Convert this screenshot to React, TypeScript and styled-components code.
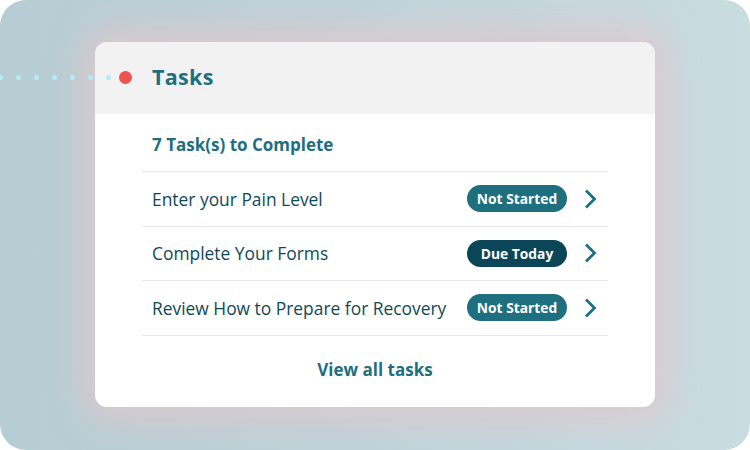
import React from "react"
import styled, { createGlobalStyle } from "styled-components"

const GlobalStyle = createGlobalStyle`
    html, body {
        margin: 0;
        padding: 0;
        background: #ffffff;
    }
    body {
        font-family: "Open Sans", "Noto Sans", sans-serif;
    }
`

const Backdrop = styled.div`
    width: 750px;
    height: 450px;
    box-sizing: border-box;
    border-radius: 26px;
    background: linear-gradient(90deg, #b5cdd3 0%, #bfd4d9 50%, #c9dce0 100%);
    padding: 42px 95px 43px 95px;
    position: relative;
    overflow: hidden;
`

const Card = styled.div`
    position: relative;
    height: 100%;
    border-radius: 12px;
    background: #ffffff;
    box-shadow: 0 0 36px 14px rgba(226, 198, 206, 0.8);
    display: flex;
    flex-direction: column;
`

const Header = styled.div`
    height: 72px;
    background: #f2f2f2;
    border-radius: 12px 12px 0 0;
    display: flex;
    align-items: center;
    padding: 0 0 3px 57px;
    box-sizing: border-box;
    font-size: 21.5px;
    font-weight: 700;
    color: #1e6f80;
    letter-spacing: 0.3px;
`

const Connector = styled.div`
    position: absolute;
    left: -97px;
    top: 29px;
    height: 13px;
    display: flex;
    align-items: center;
    gap: 12.6px;
`

const Dot = styled.span<{ $big?: boolean }>`
    flex: none;
    width: ${({ $big }) => ($big ? 13 : 5.4)}px;
    height: ${({ $big }) => ($big ? 13 : 5.4)}px;
    border-radius: 50%;
    background: ${({ $big }) => ($big ? "#ef5350" : "#b4ebf5")};
    margin-left: ${({ $big }) => ($big ? -4.5 : 0)}px;
`

const Body = styled.div`
    flex: 1;
    padding: 0 47px;
    display: flex;
    flex-direction: column;
`

const Summary = styled.div`
    box-sizing: border-box;
    height: 58px;
    display: flex;
    align-items: center;
    padding: 3px 0 0 10px;
    font-size: 17px;
    font-weight: 700;
    color: #1e6f80;
    border-bottom: 1.5px solid #e8e8e8;
`

const Row = styled.div`
    box-sizing: border-box;
    height: 54.5px;
    display: flex;
    align-items: center;
    padding-left: 10px;
    border-bottom: 1.5px solid #e8e8e8;
`

const RowLabel = styled.div`
    flex: 1;
    font-size: 17.4px;
    color: #0f4a5a;
`

const Badge = styled.span<{ $tone: "normal" | "due" }>`
    width: 100px;
    height: 27px;
    border-radius: 14px;
    background: ${({ $tone }) => ($tone === "due" ? "#0a4657" : "#1e6f80")};
    color: #ffffff;
    font-size: 13.8px;
    font-weight: 700;
    display: flex;
    align-items: center;
    justify-content: center;
`

const Chevron = styled.svg`
    width: 14px;
    height: 20px;
    margin: 0 10px 0 17px;
`

const Footer = styled.div`
    flex: 1;
    display: flex;
    align-items: center;
    justify-content: center;
    font-size: 17px;
    font-weight: 700;
    color: #1e6f80;
    padding-bottom: 4px;
`

const tasks = [
    { label: "Enter your Pain Level", status: "Not Started", tone: "normal" as const },
    { label: "Complete Your Forms", status: "Due Today", tone: "due" as const },
    { label: "Review How to Prepare for Recovery", status: "Not Started", tone: "normal" as const },
]

export default function App() {
    return (
        <>
            <GlobalStyle />
            <Backdrop>
                <Card>
                    <Connector>
                        {Array.from({ length: 7 }).map((_, i) => (
                            <Dot key={i} />
                        ))}
                        <Dot $big />
                    </Connector>
                    <Header>Tasks</Header>
                    <Body>
                        <Summary>7 Task(s) to Complete</Summary>
                        {tasks.map((t) => (
                            <Row key={t.label}>
                                <RowLabel>{t.label}</RowLabel>
                                <Badge $tone={t.tone}>{t.status}</Badge>
                                <Chevron viewBox="0 0 14 20">
                                    <path d="M3 2.5 L10.5 10 L3 17.5" fill="none" stroke="#1e6f80" strokeWidth="2.8" strokeLinecap="square" />
                                </Chevron>
                            </Row>
                        ))}
                        <Footer>View all tasks</Footer>
                    </Body>
                </Card>
            </Backdrop>
        </>
    )
}
